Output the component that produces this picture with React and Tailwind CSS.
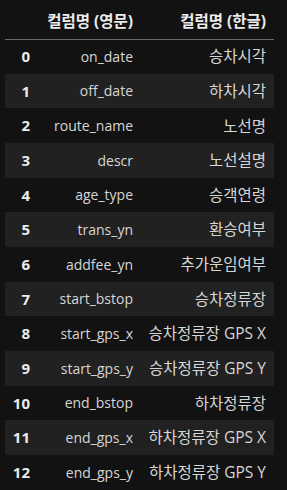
const rows = [
  ["on_date", "승차시각"],
  ["off_date", "하차시각"],
  ["route_name", "노선명"],
  ["descr", "노선설명"],
  ["age_type", "승객연령"],
  ["trans_yn", "환승여부"],
  ["addfee_yn", "추가운임여부"],
  ["start_bstop", "승차정류장"],
  ["start_gps_x", "승차정류장 GPS X"],
  ["start_gps_y", "승차정류장 GPS Y"],
  ["end_bstop", "하차정류장"],
  ["end_gps_x", "하차정류장 GPS X"],
  ["end_gps_y", "하차정류장 GPS Y"],
];

// hangul runs get the CJK face, the rest stays in Open Sans
function Mixed({ text }) {
  const parts = text.split(/([가-힣]+)/).filter(Boolean);
  return parts.map((p, i) =>
    /[가-힣]/.test(p) ? (
      <span key={i} className="font-['Noto_Sans_CJK_KR']">
        {p}
      </span>
    ) : (
      <span key={i}>{p}</span>
    )
  );
}

export default function App() {
  return (
    <div className="h-[490px] w-[287px] overflow-hidden bg-[#121212] font-['Open_Sans',sans-serif] text-[14px] text-[#d6d6d6]">
      <table className="ml-[5px] w-[269px] table-fixed border-collapse text-[14px]">
        <colgroup>
          <col className="w-[33px]" />
          <col className="w-[103px]" />
          <col className="w-[133px]" />
        </colgroup>
        <thead>
          <tr className="h-[39px] border-b border-[#6b6b6b]">
            <th></th>
            <th className="pr-2 pt-[3px] text-right text-[15.5px] font-bold whitespace-nowrap text-[#ececec]">
              <Mixed text="컬럼명 (영문)" />
            </th>
            <th className="pr-2 pt-[3px] text-right text-[15.5px] font-bold whitespace-nowrap text-[#ececec]">
              <Mixed text="컬럼명 (한글)" />
            </th>
          </tr>
        </thead>
        <tbody>
          {rows.map(([en, ko], i) => (
            <tr
              key={en}
              className={`h-[34.67px] ${i % 2 === 1 ? "bg-[#212121]" : ""}`}
            >
              <th className="pr-2 text-right text-[15px] font-bold text-[#ececec]">
                {i}
              </th>
              <td className="pr-2 text-right whitespace-nowrap">{en}</td>
              <td className="pr-2 text-right text-[15.5px] whitespace-nowrap">
                <Mixed text={ko} />
              </td>
            </tr>
          ))}
        </tbody>
      </table>
    </div>
  );
}
